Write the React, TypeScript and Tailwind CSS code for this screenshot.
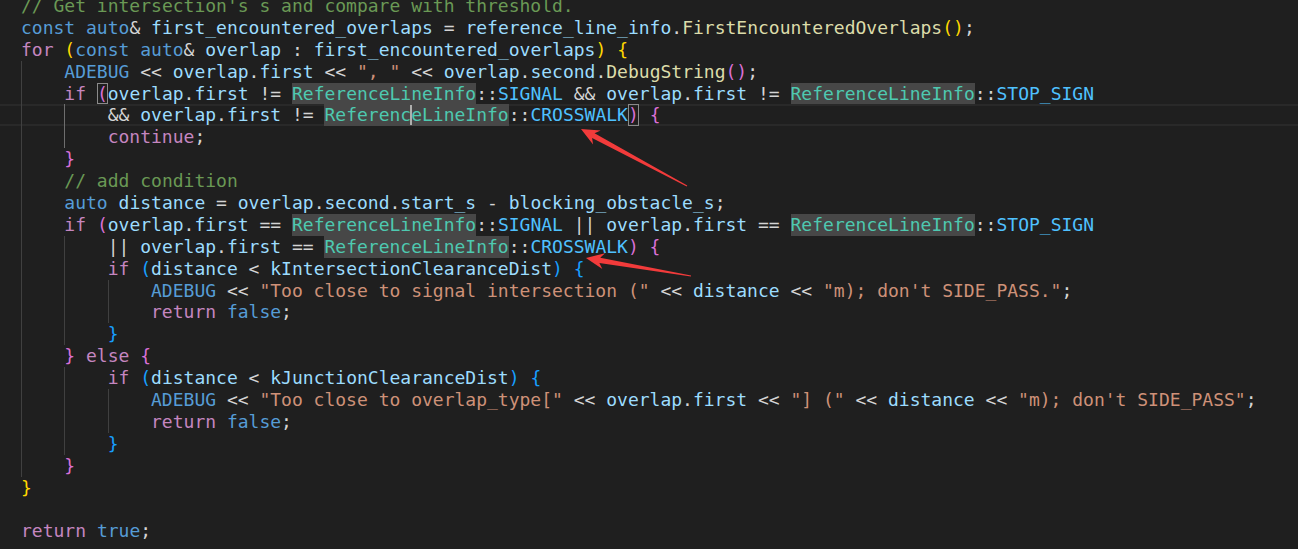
import type { FC, ReactNode } from 'react';

const col = {
  kw: 'text-[#c586c0]',
  st: 'text-[#569cd6]',
  v: 'text-[#9cdcfe]',
  fn: 'text-[#dcdcaa]',
  ty: 'text-[#4ec9b0]',
  en: 'text-[#4fc1ff]',
  str: 'text-[#ce9178]',
  cm: 'text-[#6a9955]',
  op: 'text-[#d4d4d4]',
  b1: 'text-[#ffd700]',
  b2: 'text-[#da70d6]',
  b3: 'text-[#179fff]',
};

const K: FC<{ c: keyof typeof col; children: ReactNode }> = ({ c, children }) => (
  <span className={col[c]}>{children}</span>
);

// word highlight on the type name
const Ty: FC<{ children?: ReactNode }> = ({ children }) => (
  <span className="inline-block h-full bg-[#474747] align-top text-[#4ec9b0]">
    {children ?? 'ReferenceLineInfo'}
  </span>
);

// bracket match box
const Box: FC<{ children: ReactNode }> = ({ children }) => (
  <span className="inline-block h-full align-top text-[#da70d6] shadow-[inset_0_0_0_1px_#8a8a8a]">
    {children}
  </span>
);

const Line: FC<{
  guides?: number;
  active?: number;
  current?: boolean;
  children?: ReactNode;
}> = ({ guides = 0, active = -1, current, children }) => (
  <div
    className={
      'h-[21.9px] pl-[21px] leading-[21.9px] whitespace-pre ' +
      (current ? 'shadow-[inset_0_2px_0_#292929,inset_0_-2px_0_#292929]' : '')
    }
  >
    {Array.from({ length: guides }).map((_, i) => (
      <span
        key={i}
        className={
          'inline-block h-full w-[4ch] align-top ' +
          (i === active
            ? 'shadow-[inset_1px_0_0_#6e6e6e]'
            : 'shadow-[inset_1px_0_0_#404040]')
        }
      />
    ))}
    {children}
  </div>
);

type Pt = [number, number];

const arrowPoints = (tail: Pt, tip: Pt) => {
  const dx = tip[0] - tail[0];
  const dy = tip[1] - tail[1];
  const len = Math.hypot(dx, dy);
  const ux = dx / len;
  const uy = dy / len;
  const nx = -uy;
  const ny = ux;
  const headLen = 18;
  const headW = 8;
  const neck = 2.6;
  const tailW = 0.5;
  const bx = tip[0] - ux * headLen;
  const by = tip[1] - uy * headLen;
  const nbx = tip[0] - ux * (headLen - 4);
  const nby = tip[1] - uy * (headLen - 4);
  const pts: Pt[] = [
    tip,
    [bx + nx * headW, by + ny * headW],
    [nbx + nx * neck, nby + ny * neck],
    [tail[0] + nx * tailW, tail[1] + ny * tailW],
    [tail[0] - nx * tailW, tail[1] - ny * tailW],
    [nbx - nx * neck, nby - ny * neck],
    [bx - nx * headW, by - ny * headW],
  ];
  return pts.map((p) => p.join(',')).join(' ');
};

export default function App() {
  return (
    <div className="relative h-[549px] w-[1298px] overflow-hidden bg-[#1f1f1f] font-['DejaVu_Sans_Mono',monospace] text-[18px] text-[#d4d4d4]">
      <div className="mt-[-5px]">
        <Line>
          <K c="cm">// Get intersection's s and compare with threshold.</K>
        </Line>
        <Line>
          <K c="st">const</K> <K c="st">auto</K>&amp; <K c="v">first_encountered_overlaps</K> ={' '}
          <K c="v">reference_line_info</K>.<K c="fn">FirstEncounteredOverlaps</K>
          <K c="b1">()</K>;
        </Line>
        <Line>
          <K c="kw">for</K> <K c="b1">(</K>
          <K c="st">const</K> <K c="st">auto</K>&amp; <K c="v">overlap</K> :{' '}
          <K c="v">first_encountered_overlaps</K>
          <K c="b1">)</K> <K c="b1">{'{'}</K>
        </Line>
        <Line guides={1}>
          <K c="st">ADEBUG</K> &lt;&lt; <K c="v">overlap</K>.<K c="v">first</K> &lt;&lt;{' '}
          <K c="str">", "</K> &lt;&lt; <K c="v">overlap</K>.<K c="v">second</K>.
          <K c="fn">DebugString</K>
          <K c="b2">()</K>;
        </Line>
        <Line guides={1}>
          <K c="kw">if</K> <Box>(</Box>
          <K c="v">overlap</K>.<K c="v">first</K> != <Ty />::<K c="en">SIGNAL</K> &amp;&amp;{' '}
          <K c="v">overlap</K>.<K c="v">first</K> != <Ty />::<K c="en">STOP_SIGN</K>
        </Line>
        <Line guides={2} active={1} current>
          &amp;&amp; <K c="v">overlap</K>.<K c="v">first</K> !={' '}
          <Ty>
            Referenc
            <span className="relative inline-block h-full w-0 align-top">
              <span className="absolute left-[-1px] top-[1px] h-[20px] w-[2px] bg-[#aeafad]" />
            </span>
            eLineInfo
          </Ty>
          ::<K c="en">CROSSWALK</K>
          <Box>)</Box> <K c="b2">{'{'}</K>
        </Line>
        <Line guides={2} active={1}>
          <K c="kw">continue</K>;
        </Line>
        <Line guides={1}>
          <K c="b2">{'}'}</K>
        </Line>
        <Line guides={1}>
          <K c="cm">// add condition</K>
        </Line>
        <Line guides={1}>
          <K c="st">auto</K> <K c="v">distance</K> = <K c="v">overlap</K>.<K c="v">second</K>.
          <K c="v">start_s</K> - <K c="v">blocking_obstacle_s</K>;
        </Line>
        <Line guides={1}>
          <K c="kw">if</K> <K c="b2">(</K>
          <K c="v">overlap</K>.<K c="v">first</K> == <Ty />::<K c="en">SIGNAL</K> ||{' '}
          <K c="v">overlap</K>.<K c="v">first</K> == <Ty />::<K c="en">STOP_SIGN</K>
        </Line>
        <Line guides={2}>
          || <K c="v">overlap</K>.<K c="v">first</K> == <Ty />::<K c="en">CROSSWALK</K>
          <K c="b2">)</K> <K c="b2">{'{'}</K>
        </Line>
        <Line guides={2}>
          <K c="kw">if</K> <K c="b3">(</K>
          <K c="v">distance</K> &lt; <K c="v">kIntersectionClearanceDist</K>
          <K c="b3">)</K> <K c="b3">{'{'}</K>
        </Line>
        <Line guides={3}>
          <K c="st">ADEBUG</K> &lt;&lt; <K c="str">"Too close to signal intersection ("</K> &lt;&lt;{' '}
          <K c="v">distance</K> &lt;&lt; <K c="str">"m); don't SIDE_PASS."</K>;
        </Line>
        <Line guides={3}>
          <K c="kw">return</K> <K c="st">false</K>;
        </Line>
        <Line guides={2}>
          <K c="b3">{'}'}</K>
        </Line>
        <Line guides={1}>
          <K c="b2">{'}'}</K> <K c="kw">else</K> <K c="b2">{'{'}</K>
        </Line>
        <Line guides={2}>
          <K c="kw">if</K> <K c="b3">(</K>
          <K c="v">distance</K> &lt; <K c="v">kJunctionClearanceDist</K>
          <K c="b3">)</K> <K c="b3">{'{'}</K>
        </Line>
        <Line guides={3}>
          <K c="st">ADEBUG</K> &lt;&lt; <K c="str">"Too close to overlap_type["</K> &lt;&lt;{' '}
          <K c="v">overlap</K>.<K c="v">first</K> &lt;&lt; <K c="str">"] ("</K> &lt;&lt;{' '}
          <K c="v">distance</K> &lt;&lt; <K c="str">"m); don't SIDE_PASS"</K>;
        </Line>
        <Line guides={3}>
          <K c="kw">return</K> <K c="st">false</K>;
        </Line>
        <Line guides={2}>
          <K c="b3">{'}'}</K>
        </Line>
        <Line guides={1}>
          <K c="b2">{'}'}</K>
        </Line>
        <Line>
          <K c="b1">{'}'}</K>
        </Line>
        <Line />
        <Line>
          <K c="kw">return</K> <K c="st">true</K>;
        </Line>
      </div>

      {/* annotation arrows */}
      <svg
        className="pointer-events-none absolute inset-0"
        width={1298}
        height={549}
        viewBox="0 0 1298 549"
      >
        <polygon points={arrowPoints([687, 186], [581, 129])} fill="#f23b3b" />
        <polygon points={arrowPoints([691, 276], [586, 258])} fill="#f23b3b" />
      </svg>
    </div>
  );
}
